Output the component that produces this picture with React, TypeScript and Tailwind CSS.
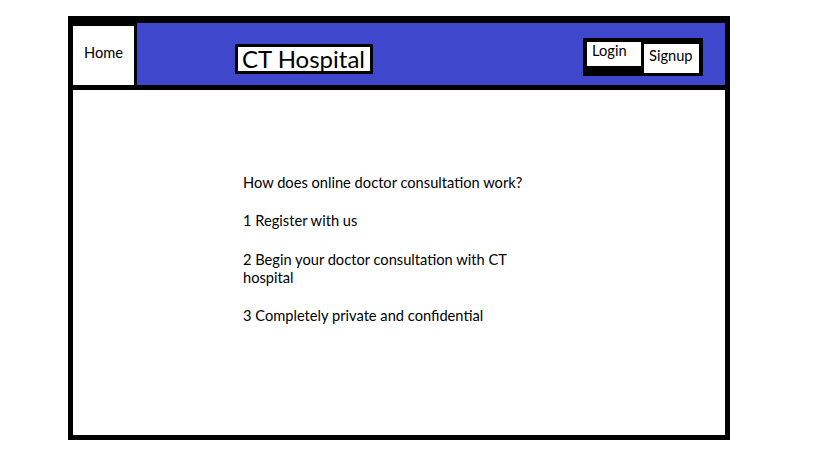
import React from "react";

export default function App() {
  const font = { fontFamily: "Lato, 'Open Sans', sans-serif" };
  return (
    <div className="w-[819px] h-[460px] bg-white" style={font}>
      <div className="relative ml-[68px] mt-[16px] w-[662px] h-[424px] border-black border-x-[5px] border-t-[7px] border-b-[5px] flex flex-col">
        <div className="flex items-start h-[67px] bg-[#3f48cc] border-b-[5px] border-black shrink-0">
          <div className="w-[64px] h-full bg-white border-t-[3px] border-r-[3px] border-black flex justify-center pt-[18px] text-[14.67px] leading-[18px] text-black">
            Home
          </div>
          <div className="ml-[98px] mt-[21px] w-[138px] h-[30px] border-[3px] border-black bg-white pl-[4px] text-[24px] leading-[24px] text-black">
            CT Hospital
          </div>
          <div className="ml-auto mr-[22px] mt-[15px] flex items-start gap-[3px] bg-black p-[4px] pb-[3px]">
            <div className="w-[54px] h-[24px] bg-white pl-[5px] text-[14.67px] leading-[18px] text-black">
              Login
            </div>
            <div className="mt-[2px] w-[55px] h-[29px] bg-white pl-[5px] pt-[3px] text-[14.67px] leading-[18px] text-black">
              Signup
            </div>
          </div>
        </div>
        <div className="flex-1 bg-white pl-[170px] pt-[84px]">
          <div className="flex flex-col gap-[20px] text-[14.67px] leading-[18.3px] text-black">
            <p>How does online doctor consultation work?</p>
            <p>1 Register with us</p>
            <p>
              2 Begin your doctor consultation with CT
              <br />
              hospital
            </p>
            <p>3 Completely private and confidential</p>
          </div>
        </div>
      </div>
    </div>
  );
}
